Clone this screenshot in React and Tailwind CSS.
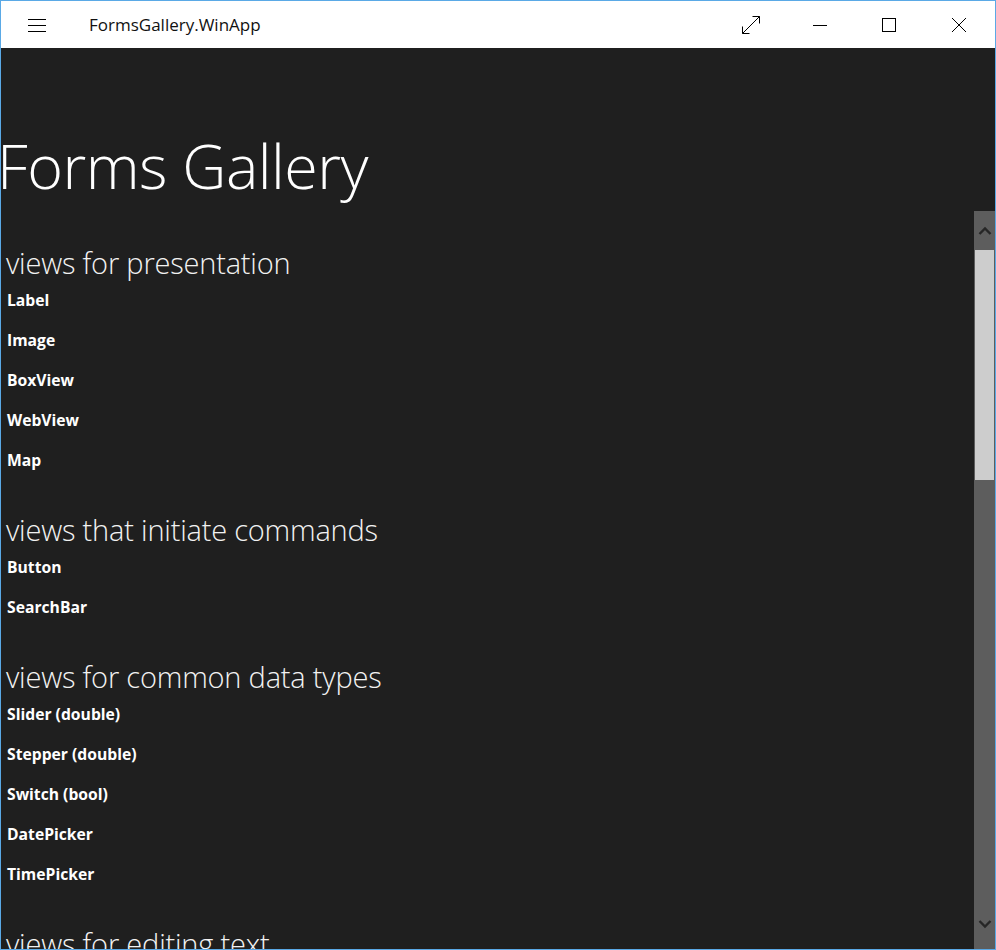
import React from "react";

const sections = [
  { title: "views for presentation", items: ["Label", "Image", "BoxView", "WebView", "Map"] },
  { title: "views that initiate commands", items: ["Button", "SearchBar"] },
  { title: "views for common data types", items: ["Slider (double)", "Stepper (double)", "Switch (bool)", "DatePicker", "TimePicker"] },
  { title: "views for editing text", items: ["Entry", "Editor"] },
];

function TitleBar() {
  return (
    <div className="flex h-[47px] shrink-0 items-center bg-white text-black">
      <div className="flex w-[72px] items-center justify-center">
        <svg width="20" height="14" viewBox="0 0 20 14" className="ml-[-1px]">
          <path d="M1 1.5H19M1 7.5H19M1 13.5H19" stroke="#000" strokeWidth="1" />
        </svg>
      </div>
      <div className="ml-[16px] text-[17px] leading-none text-[#111]">FormsGallery.WinApp</div>
      <div className="ml-auto flex h-full items-center">
        <div className="flex h-full w-[69px] items-center justify-center">
          <svg width="20" height="20" viewBox="0 0 20 20">
            <path d="M1.5 18.5L18.5 1.5M11.5 1.5H18.5V8.5M1.5 11.5V18.5H8.5" stroke="#000" strokeWidth="1" fill="none" />
          </svg>
        </div>
        <div className="flex h-full w-[69px] items-center justify-center">
          <svg width="16" height="16" viewBox="0 0 16 16">
            <path d="M1 8.5H15" stroke="#000" strokeWidth="1" />
          </svg>
        </div>
        <div className="flex h-full w-[69px] items-center justify-center">
          <svg width="16" height="16" viewBox="0 0 16 16">
            <rect x="1.5" y="1.5" width="13" height="13" stroke="#000" strokeWidth="1" fill="none" />
          </svg>
        </div>
        <div className="flex h-full w-[72px] items-center justify-center">
          <svg width="16" height="16" viewBox="0 0 16 16">
            <path d="M1 1L15 15M15 1L1 15" stroke="#000" strokeWidth="1" />
          </svg>
        </div>
      </div>
    </div>
  );
}

function ScrollBar() {
  return (
    <div className="mt-[163px] flex w-[21px] shrink-0 flex-col bg-[#5d5d5d]">
      <div className="flex h-[39px] items-center justify-center">
        <svg width="14" height="10" viewBox="0 0 14 10">
          <path d="M1.5 8L7 2.5L12.5 8" stroke="#262626" strokeWidth="2.4" fill="none" />
        </svg>
      </div>
      <div className="mx-[1px] h-[230px] bg-[#cdcdcd]" />
      <div className="flex-1" />
      <div className="flex h-[40px] items-center justify-center pb-[10px]">
        <svg width="14" height="10" viewBox="0 0 14 10">
          <path d="M1.5 2L7 7.5L12.5 2" stroke="#262626" strokeWidth="2.4" fill="none" />
        </svg>
      </div>
    </div>
  );
}

export default function App() {
  return (
    <div
      className="flex h-[950px] w-[996px] flex-col overflow-hidden border border-[#5aa9e6] bg-[#1f1f1f]"
      style={{ fontFamily: '"Open Sans", "Noto Sans", sans-serif' }}
    >
      <TitleBar />
      <div className="flex min-h-0 flex-1">
        <div className="min-w-0 flex-1 overflow-hidden text-white">
          <h1 className="ml-[-4px] mt-[80px] text-[61px] font-light leading-[76px] tracking-[-0.5px]">Forms Gallery</h1>
          <div className="mt-[39px] flex flex-col">
            {sections.map((s, i) => (
              <div key={s.title} className={i === 0 ? "" : "mt-[27px]"}>
                <div className="ml-[5px] h-[40px] text-[29px] font-light leading-[40px] tracking-[-0.2px] text-[#f2f2f2]">
                  {s.title}
                </div>
                <div className="flex flex-col">
                  {s.items.map((it) => (
                    <div key={it} className="ml-[6px] h-[40px] text-[15.7px] font-bold leading-[34px]">
                      {it}
                    </div>
                  ))}
                </div>
              </div>
            ))}
          </div>
        </div>
        <ScrollBar />
      </div>
    </div>
  );
}
